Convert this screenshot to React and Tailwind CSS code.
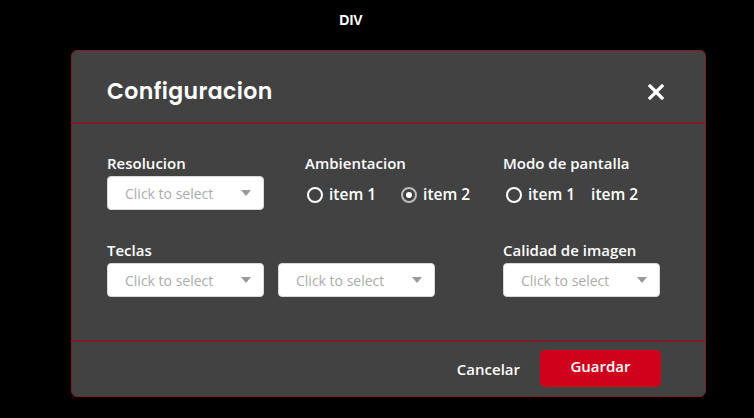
import React from "react";

function Select() {
  return (
    <div className="flex h-[34px] w-[157px] items-center justify-between rounded-[4px] border border-[#d9d9d9] bg-white pl-[17px] pr-[12px]">
      <span className="font-['Open_Sans',sans-serif] text-[14px] text-[#ababab]">
        Click to select
      </span>
      <svg width="10" height="6" viewBox="0 0 10 6">
        <path d="M0 0 L10 0 L5 6 Z" fill="#9a9a9a" />
      </svg>
    </div>
  );
}

function Radio({ checked, label, hideCircle }) {
  return (
    <div className="flex items-center gap-[6px]">
      {!hideCircle && (
        <span
          className={
            "flex h-[16px] w-[16px] items-center justify-center rounded-full border-2 " +
            (checked ? "border-[#bdbdbd]" : "border-white")
          }
        >
          {checked && <span className="h-[6px] w-[6px] rounded-full bg-white" />}
        </span>
      )}
      <span className="text-[15.5px] font-semibold text-white">{label}</span>
    </div>
  );
}

export default function App() {
  return (
    <div className="min-h-[418px] w-[754px] bg-black font-['Open_Sans',sans-serif]">
      <div className="flex h-[40px] items-center justify-center">
        <span className="ml-[-52px] font-['Liberation_Sans',Arial,sans-serif] text-[14px] font-bold text-white">
          DIV
        </span>
      </div>
      <div className="ml-[71px] mt-[10px] w-[635px] rounded-[6px] border border-[#7d1e29] bg-[#424242]">
        <div className="flex h-[73px] items-center justify-between border-b-2 border-[#7d1e29] pl-[35px] pr-[41px] pt-[10px]">
          <span className="font-['Poppins','Lato',sans-serif] text-[22px] font-semibold tracking-[0.4px] text-white">
            Configuracion
          </span>
          <svg width="16" height="16" viewBox="0 0 16 16">
            <path d="M2 2 L14 14 M14 2 L2 14" stroke="white" strokeWidth="3.2" strokeLinecap="square" />
          </svg>
        </div>
        <div className="flex h-[216px] flex-col gap-[28px] pl-[35px] pt-[29px]">
          <div className="grid grid-cols-[198px_198px_198px]">
            <div className="flex flex-col gap-[3px]">
              <span className="text-[15px] font-semibold leading-[20px] text-white">Resolucion</span>
              <Select />
            </div>
            <div className="flex flex-col gap-[3px]">
              <span className="text-[15px] font-semibold leading-[20px] text-white">Ambientacion</span>
              <div className="flex h-[36px] items-center gap-[25px] pl-[2px] pt-[2px]">
                <Radio label="item 1" />
                <Radio label="item 2" checked />
              </div>
            </div>
            <div className="flex flex-col gap-[3px]">
              <span className="text-[15px] font-semibold leading-[20px] text-white">Modo de pantalla</span>
              <div className="flex h-[36px] items-center gap-[16px] pl-[3px] pt-[2px]">
                <Radio label="item 1" />
                <Radio label="item 2" hideCircle />
              </div>
            </div>
          </div>
          <div className="grid grid-cols-[198px_198px_198px]">
            <div className="col-span-2 flex flex-col gap-[3px]">
              <span className="text-[15px] font-semibold leading-[20px] text-white">Teclas</span>
              <div className="flex gap-[14px]">
                <Select />
                <Select />
              </div>
            </div>
            <div className="flex flex-col gap-[3px]">
              <span className="text-[15px] font-semibold leading-[20px] text-white">Calidad de imagen</span>
              <Select />
            </div>
          </div>
        </div>
        <div className="flex h-[56px] items-center justify-end gap-[20px] border-t-2 border-[#7d1e29] pb-[2px] pr-[44px]">
          <span className="mt-[3px] text-[15px] font-semibold text-white">Cancelar</span>
          <div className="flex h-[37px] w-[121px] items-center justify-center rounded-[5px] bg-[#d0021b] pb-[3px]">
            <span className="text-[15px] font-semibold text-white">Guardar</span>
          </div>
        </div>
      </div>
    </div>
  );
}
